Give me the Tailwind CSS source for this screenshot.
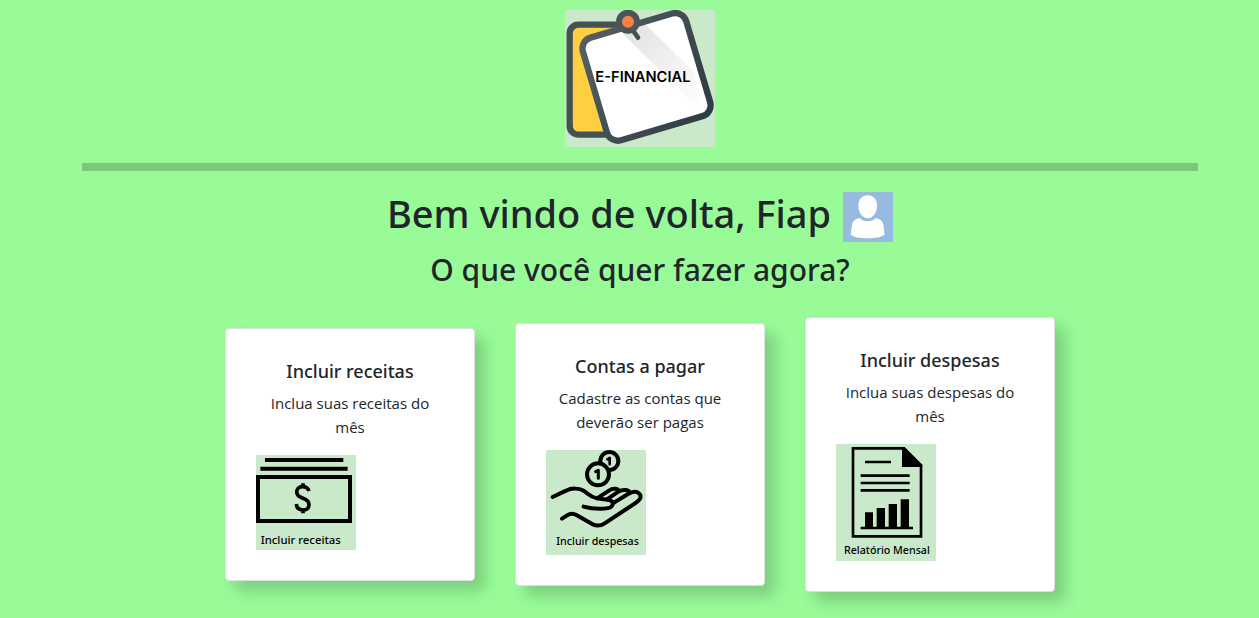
<!DOCTYPE html>
<html lang="pt-br">
<head>
<meta charset="utf-8">
<meta name="viewport" content="width=device-width, initial-scale=1">
<title>E-Financial</title>
<script src="https://cdn.jsdelivr.net/npm/@tailwindcss/browser@4"></script>
</head>
<body class="min-h-screen bg-[#98fb98] pl-[21px] font-['Open_Sans','Noto_Sans',sans-serif] text-[#212529]">
<div class="mx-auto max-w-[1140px] px-3 pt-[10px]">
  <header>
    <svg class="mx-auto block h-[137px] w-[150px]" viewBox="0 0 450 411" role="img" aria-label="E-Financial">
      <defs>
        <linearGradient id="ink" x1="0" y1="0" x2="1" y2="1"><stop offset="0" stop-color="#566064"/><stop offset="1" stop-color="#2d3b42"/></linearGradient>
        <linearGradient id="shade" gradientUnits="userSpaceOnUse" x1="200" y1="60" x2="410" y2="290"><stop offset="0" stop-color="#e4e4e4"/><stop offset="1" stop-color="#fff"/></linearGradient>
      </defs>
      <rect width="450" height="411" fill="#cae8ca"/>
      <rect x="14" y="44" width="210" height="330" rx="26" fill="#fdcf41" stroke="#465156" stroke-width="19"/>
      <rect x="83" y="40" width="323" height="321" rx="34" fill="#fff" transform="rotate(-16.5 245 200)"/>
      <path d="M174 72L240 42L388 186L412 284L400 295Z" fill="url(#shade)"/>
      <rect x="83" y="40" width="323" height="321" rx="34" fill="none" stroke="url(#ink)" stroke-width="19" transform="rotate(-16.5 245 200)"/>
      <path d="M203 60L219 83" stroke="#465156" stroke-width="14" stroke-linecap="round"/>
      <circle cx="189" cy="35" r="27" fill="#f8813f" stroke="#4a5559" stroke-width="18"/>
      <text x="91" y="215" font-family="Inter, sans-serif" font-weight="600" font-size="44" fill="#000">E-FINANCIAL</text>
    </svg>
  </header>
  <hr class="my-4 h-2 border-0 bg-[#7cc87c]">
  <main>
    <h1 class="mt-[21px] flex items-center justify-center gap-3 font-['Noto_Sans',sans-serif] text-[38px] leading-[50px] font-medium">
      <span class="-mt-2">Bem vindo de volta, Fiap</span>
      <svg class="size-[50px]" viewBox="0 0 150 150" aria-hidden="true">
        <rect width="150" height="150" fill="#97bbe0"/>
        <path d="M74 10C92 10 102 23 102 42C102 61 90 79 74 79C58 79 46 61 46 42C46 23 56 10 74 10Z" fill="#fff"/>
        <path d="M50 78C61 91 87 91 98 78C113 82 119 87 121 98L125 128C108 142 40 142 23 128L27 98C29 87 35 82 50 78Z" fill="#fff"/>
      </svg>
    </h1>
    <h2 class="mt-2 text-center font-['Noto_Sans',sans-serif] text-[30px] leading-10 font-medium">O que você quer fazer agora?</h2>
    <section class="mt-[27px] flex items-center justify-center gap-10">
      <article class="w-[250px] rounded border border-[#dfdfdf] bg-white p-[30px] shadow-[10px_10px_15px_rgba(0,0,0,0.18)]">
        <h3 class="mb-2 text-center font-['Noto_Sans',sans-serif] text-lg leading-6 font-medium">Incluir receitas</h3>
        <p class="mb-4 text-center text-[15px] leading-6">Inclua suas receitas do mês</p>
        <a href="#receitas" class="block w-[100px]">
          <svg class="block w-full" viewBox="0 0 300 285" role="img" aria-label="Incluir receitas">
            <rect width="300" height="285" fill="#cae8ca"/>
            <path d="M27 9H262V21H27ZM13 35H275V47H13Z"/>
            <rect x="6" y="66" width="276" height="132" fill="none" stroke="#000" stroke-width="12"/>
            <path d="M141 85V98M141 164V175M159 108C156 99 149 95 140 95C128 95 122 102 122 111C122 122 130 126 141 130C152 134 159 139 159 149C159 160 151 165 141 165C129 165 122 158 121 147" fill="none" stroke="#000" stroke-width="11"/>
            <text x="14" y="267" font-family="Noto Sans, sans-serif" font-weight="500" font-size="34">Incluir receitas</text>
          </svg>
        </a>
      </article>
      <article class="w-[250px] rounded border border-[#dfdfdf] bg-white p-[30px] shadow-[10px_10px_15px_rgba(0,0,0,0.18)]">
        <h3 class="mb-2 text-center font-['Noto_Sans',sans-serif] text-lg leading-6 font-medium">Contas a pagar</h3>
        <p class="mb-4 text-center text-[15px] leading-6">Cadastre as contas que deverão ser pagas</p>
        <a href="#contas" class="block w-[100px]">
          <svg class="block w-full" viewBox="0 0 300 315" role="img" aria-label="Incluir despesas">
            <rect width="300" height="315" fill="#cae8ca"/>
            <g fill="#cae8ca" stroke="#000" stroke-width="12" stroke-linecap="round" stroke-linejoin="round">
              <circle cx="190" cy="33" r="27"/>
              <path d="M184 28L191 24V43" fill="none" stroke-width="8"/>
              <circle cx="156" cy="73" r="33"/>
              <path d="M149 65L157 61V85" fill="none" stroke-width="9"/>
              <path d="M20 141L60 122C75 114 100 113 116 124C130 135 134 141 153 145L184 149C202 151 204 162 196 170C188 178 143 179 113 170M153 145L190 121C202 113 218 116 218 124L183 148M218 125C230 117 250 118 251 129L204 158M251 130C269 119 291 130 281 148C278 153 273 156 267 160L176 220C163 229 153 229 140 223L91 195C81 189 74 190 67 194L48 206" fill="none"/>
            </g>
            <text x="31" y="284" font-family="Noto Sans, sans-serif" font-weight="500" font-size="32">Incluir despesas</text>
          </svg>
        </a>
      </article>
      <article class="w-[250px] rounded border border-[#dfdfdf] bg-white p-[30px] shadow-[10px_10px_15px_rgba(0,0,0,0.18)]">
        <h3 class="mb-2 text-center font-['Noto_Sans',sans-serif] text-lg leading-6 font-medium">Incluir despesas</h3>
        <p class="mb-4 text-center text-[15px] leading-6">Inclua suas despesas do mês</p>
        <a href="#relatorio" class="block w-[100px]">
          <svg class="block w-full" viewBox="0 0 300 351" role="img" aria-label="Relatório Mensal">
            <rect width="300" height="351" fill="#cae8ca"/>
            <path d="M51 13H204L255 64V277H51Z" fill="none" stroke="#000" stroke-width="8"/>
            <path d="M198 9H205L259 63V69H198Z"/>
            <path d="M87 50H165V58H87ZM74 91H221V99H74ZM74 113H221V121H74ZM74 135H221V143H74ZM87 205H111V250H87ZM122 192H147V250H122ZM158 180H183V250H158ZM194 166H219V250H194ZM74 248H231V256H74Z"/>
            <text x="24" y="330" font-family="Noto Sans, sans-serif" font-weight="500" font-size="32">Relatório Mensal</text>
          </svg>
        </a>
      </article>
    </section>
  </main>
</div>
</body>
</html>
